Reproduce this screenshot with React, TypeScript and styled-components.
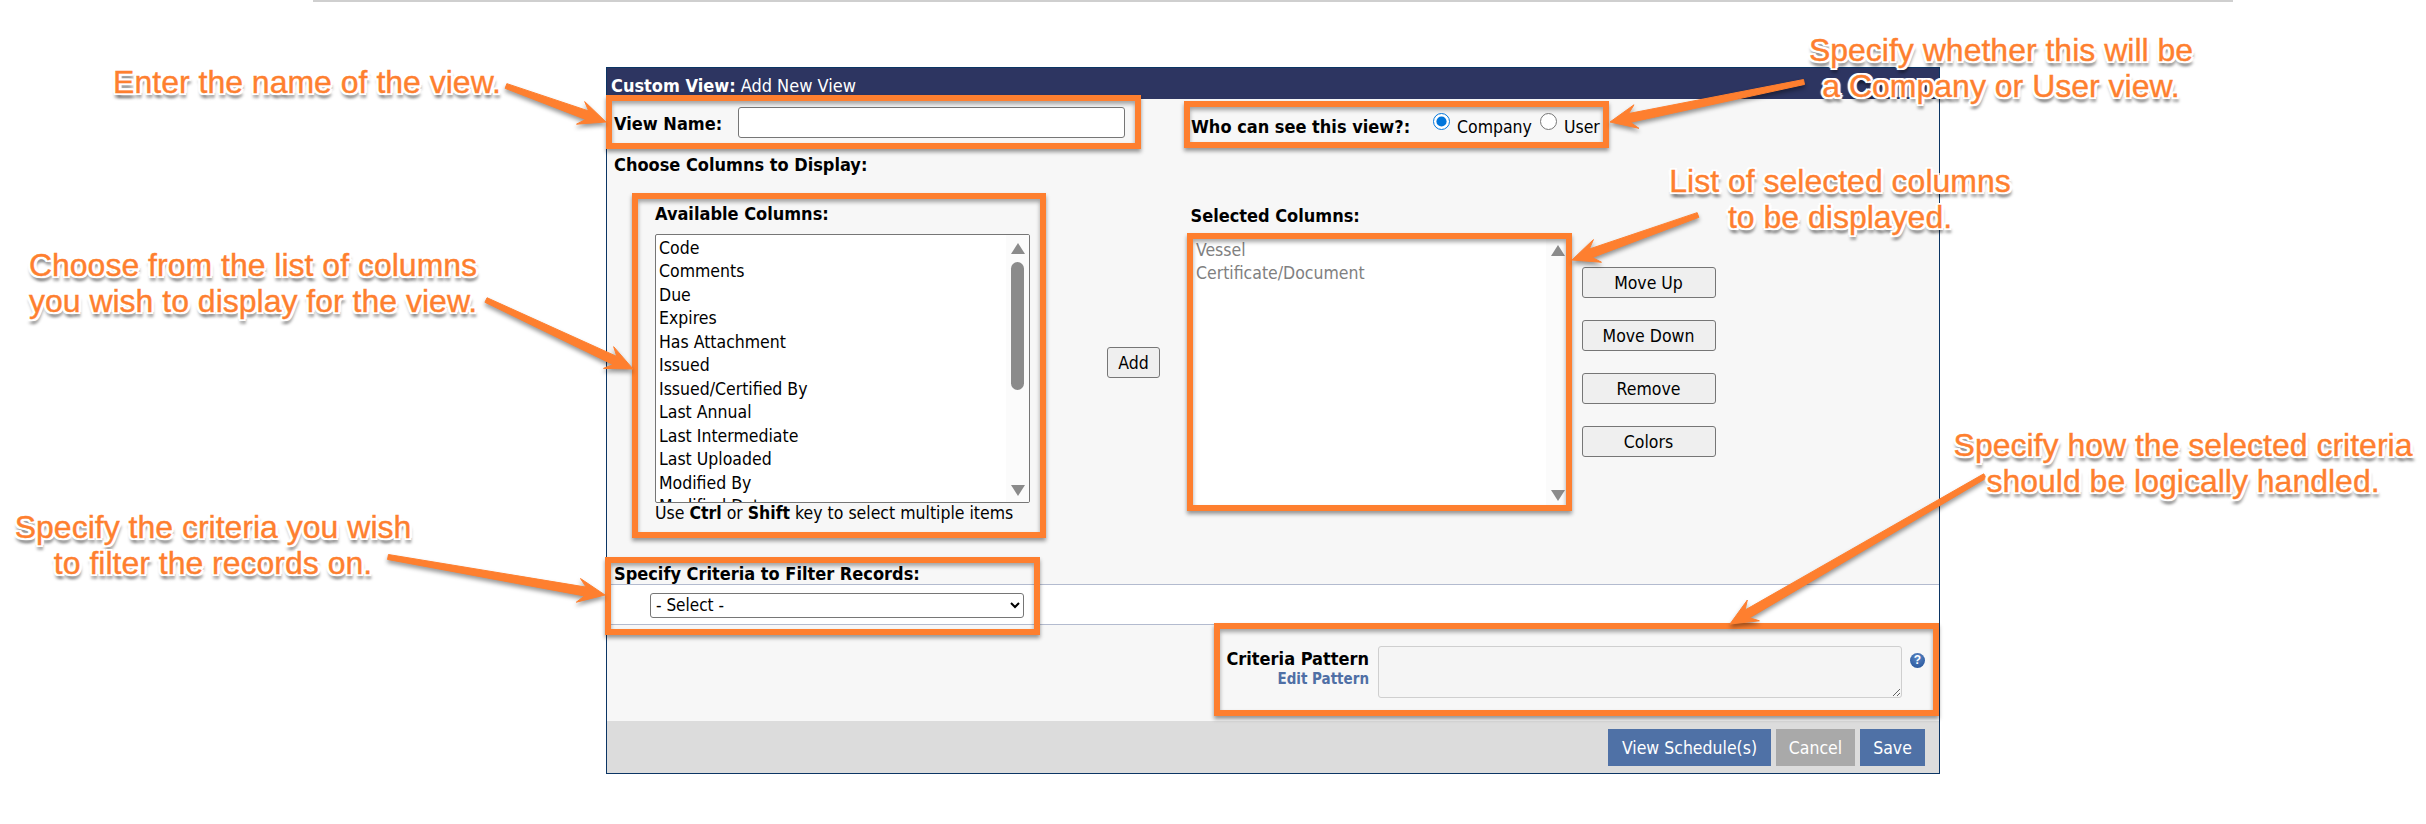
import React from "react";
import styled, { createGlobalStyle } from "styled-components";

const UI_FONT = `"DejaVu Sans Condensed", "DejaVu Sans", "Noto Sans", sans-serif`;
const ORANGE = "#fe7f2f";

const Global = createGlobalStyle`
  html, body { margin: 0; padding: 0; background: #fff; }
  body { font-family: ${UI_FONT}; font-size: 17.5px; color: #000; }
`;

const Page = styled.div`
  position: relative;
  width: 2426px;
  height: 824px;
  overflow: hidden;
  background: #fff;
`;
const TopRule = styled.div`
  width: 1920px;
  height: 2px;
  margin-left: 313px;
  margin-bottom: 65px;
  background: #cfcfcf;
`;
const Panel = styled.section`
  box-sizing: border-box;
  width: 1334px;
  height: 707px;
  margin-left: 606px;
  border: 1px solid #0b3564;
  background: #f7f7f7;
  display: flex;
  flex-direction: column;
`;
const Header = styled.header`
  height: 31px;
  flex: none;
  padding: 4px 0 0 4px;
  box-sizing: border-box;
  display: flex;
  align-items: center;
  gap: 5px;
  background: #2d3561;
  color: #fff;
  font-size: 18px;
`;
const Strong = styled.b`
  font-weight: 700;
`;
const TopRow = styled.div`
  height: 50px;
  flex: none;
  display: flex;
`;
const NameGroup = styled.div`
  width: 584px;
  box-sizing: border-box;
  padding: 8px 0 0 7px;
  display: flex;
  align-items: flex-start;
`;
const FieldLabel = styled.label`
  width: 124px;
  line-height: 34px;
  font-weight: 700;
  font-size: 18px;
`;
const NameInput = styled.input`
  box-sizing: border-box;
  width: 387px;
  height: 31px;
  border: 1px solid #767676;
  border-radius: 3px;
  background: #fff;
`;
const WhoGroup = styled.div`
  padding-top: 17px;
  display: flex;
  align-items: flex-start;
  line-height: 22px;
`;
const WhoLabel = styled.span`
  width: 242px;
  font-weight: 700;
  font-size: 18px;
`;
const Radio = styled.input`
  width: 17px;
  height: 17px;
  margin: -3px 7px 0 0;
  accent-color: #0075db;
`;
const RadioText = styled.span<{ $gap: number }>`
  margin-right: ${(p) => p.$gap}px;
`;
const SectionTitle = styled.h2`
  margin: 0;
  height: 32px;
  flex: none;
  padding-left: 7px;
  font-size: 18px;
  line-height: 32px;
  font-weight: 700;
`;
const ColumnsRow = styled.div`
  height: 375px;
  flex: none;
  display: flex;
  align-items: flex-start;
`;
const AvailableCol = styled.div`
  width: 376px;
  margin-left: 48px;
  padding-top: 21px;
`;
const ColTitle = styled.div`
  height: 22px;
  line-height: 24px;
  font-weight: 700;
  font-size: 18px;
  margin-bottom: 10px;
`;
const ListBox = styled.div<{ $h: number; $w: number; $bare?: boolean }>`
  position: relative;
  box-sizing: border-box;
  width: ${(p) => p.$w}px;
  height: ${(p) => p.$h}px;
  overflow: hidden;
  padding: 1.5px 0 0 ${(p) => (p.$bare ? 4.5 : 3)}px;
  background: #fff;
  border: 1px solid #767676;
  border-radius: 2px;
`;
const ListItem = styled.div<{ $muted?: boolean }>`
  height: 23.5px;
  line-height: 23.5px;
  font-size: 17.5px;
  white-space: nowrap;
  color: ${(p) => (p.$muted ? "#808080" : "#000")};
`;
const Track = styled.div`
  position: absolute;
  top: 0;
  right: 0;
  bottom: 0;
  width: 23px;
  background: #fbfbfb;
`;
const Thumb = styled.div`
  position: absolute;
  top: 27px;
  right: 5px;
  width: 13px;
  height: 128px;
  border-radius: 7px;
  background: #8b8b8b;
`;
const ScrollArrow = styled.div<{ $down?: boolean }>`
  position: absolute;
  right: 4px;
  ${(p) => (p.$down ? "bottom: 6px;" : "top: 8px;")}
  width: 0;
  height: 0;
  border-left: 7.5px solid transparent;
  border-right: 7.5px solid transparent;
  ${(p) => (p.$down ? "border-top" : "border-bottom")}: 11px solid #8b8b8b;
`;
const Hint = styled.div`
  height: 20px;
  line-height: 20px;
  font-size: 17.5px;
  white-space: nowrap;
`;
const GreyButton = styled.button<{ $w: number }>`
  box-sizing: border-box;
  width: ${(p) => p.$w}px;
  height: 31px;
  padding: 0;
  font-family: ${UI_FONT};
  font-size: 17.5px;
  color: #000;
  background: #efefef;
  border: 1px solid #767676;
  border-radius: 3px;
`;
const AddCol = styled.div`
  margin: 166px 31px 0 76px;
`;
const SelectedCol = styled.div`
  width: 391px;
  margin-left: -0.5px;
  padding-top: 23px;
`;
const SideButtons = styled.div`
  margin-top: 86px;
  display: flex;
  flex-direction: column;
  gap: 22px;
`;
const CriteriaTitle = styled.h2`
  margin: 0;
  flex: none;
  height: 28px;
  box-sizing: border-box;
  padding: 7px 0 0 7px;
  font-size: 18px;
  line-height: 22px;
  font-weight: 700;
`;
const SelectBand = styled.div`
  flex: none;
  box-sizing: border-box;
  height: 41px;
  padding-left: 43px;
  padding-top: 1px;
  display: flex;
  align-items: center;
  background: #fff;
  border-top: 1px solid #b3bbcf;
  border-bottom: 1px solid #b3bbcf;
`;
const CriteriaSelect = styled.select`
  box-sizing: border-box;
  width: 374px;
  height: 25px;
  padding-left: 1px;
  font-family: ${UI_FONT};
  font-size: 17px;
  border: 1px solid #767676;
  border-radius: 3px;
  background: #fff;
  color: #000;
`;
const PatternRow = styled.div`
  flex: 1;
  padding: 21px 14px 0 0;
  display: flex;
  justify-content: flex-end;
  align-items: flex-start;
`;
const PatternLabels = styled.div`
  margin-right: 9px;
  text-align: right;
`;
const PatternTitle = styled.div`
  margin-top: 2px;
  line-height: 22px;
  font-size: 18px;
  font-weight: 700;
`;
const PatternLink = styled.a`
  display: block;
  line-height: 18px;
  font-size: 15px;
  font-weight: 700;
  color: #4f6fa5;
`;
const PatternArea = styled.textarea`
  box-sizing: border-box;
  width: 524px;
  height: 52px;
  background: #f5f5f5;
  border: 1px solid #cfcfcf;
  border-radius: 3px;
`;
const HelpIcon = styled.span`
  width: 15px;
  height: 15px;
  margin: 7px 0 0 8px;
  border-radius: 50%;
  display: flex;
  align-items: center;
  justify-content: center;
  background: radial-gradient(circle at 50% 30%, #5b86c4, #1f4f96);
  color: #fff;
  font-family: "Liberation Sans", sans-serif;
  font-weight: 700;
  font-size: 12px;
  line-height: 15px;
`;
const Footer = styled.footer`
  flex: none;
  height: 52px;
  padding-right: 14px;
  display: flex;
  justify-content: flex-end;
  align-items: center;
  gap: 5px;
  background: #dcdcdc;
`;
const ActionButton = styled.button<{ $w: number; $muted?: boolean }>`
  width: ${(p) => p.$w}px;
  height: 37px;
  padding: 2px 0 0;
  border: 0;
  font-family: ${UI_FONT};
  font-size: 17.5px;
  color: #fff;
  background: ${(p) => (p.$muted ? "#a9a9a9" : "#4f71a6")};
`;

/* annotation layer */
const Highlight = styled.div<{ $x: number; $y: number; $w: number; $h: number }>`
  position: absolute;
  box-sizing: border-box;
  left: ${(p) => p.$x}px;
  top: ${(p) => p.$y}px;
  width: ${(p) => p.$w}px;
  height: ${(p) => p.$h}px;
  border: 6px solid ${ORANGE};
  box-shadow: 0 3px 4px rgba(0, 0, 0, 0.4), inset 0 3px 4px rgba(0, 0, 0, 0.35);
  pointer-events: none;
`;
const Callout = styled.div<{ $cx: number; $y: number }>`
  position: absolute;
  left: ${(p) => p.$cx - 300}px;
  top: ${(p) => p.$y}px;
  width: 600px;
  text-align: center;
  font-family: "Liberation Sans", Arial, sans-serif;
  font-size: 32px;
  line-height: 36px;
  color: ${ORANGE};
  -webkit-text-stroke: 0.4px ${ORANGE};
  text-shadow: 2px 0 0 #fff, -2px 0 0 #fff, 0 2px 0 #fff, 0 -2px 0 #fff, 2px 2px 0 #fff, -2px 2px 0 #fff,
    2px -2px 0 #fff, -2px -2px 0 #fff, 3px 0 1px #fff, -3px 0 1px #fff, 2px 5px 3px rgba(0, 0, 0, 0.4),
    -1px 5px 3px rgba(0, 0, 0, 0.3);
`;
const ArrowLayer = styled.svg`
  position: absolute;
  left: 0;
  top: 0;
  pointer-events: none;
  filter: drop-shadow(0 3px 2px rgba(0, 0, 0, 0.4));
`;

function arrowPoints(x1: number, y1: number, x2: number, y2: number) {
  const dx = x2 - x1;
  const dy = y2 - y1;
  const len = Math.hypot(dx, dy);
  const ux = dx / len;
  const uy = dy / len;
  const nx = -uy;
  const ny = ux;
  const at = (along: number, side: number) => `${x2 - ux * along + nx * side},${y2 - uy * along + ny * side}`;
  return [
    at(len, 2.5),
    at(20, 4.5),
    at(27, 12),
    at(0, 0),
    at(27, -12),
    at(20, -4.5),
    at(len, -2.5),
  ].join(" ");
}

const ARROWS = [
  [506, 86, 606, 122],
  [486, 300, 633, 369],
  [388, 557, 605, 595],
  [1804, 82, 1610, 122],
  [1698, 215, 1572, 260],
  [1985, 476, 1730, 624],
];

const AVAILABLE = [
  "Code",
  "Comments",
  "Due",
  "Expires",
  "Has Attachment",
  "Issued",
  "Issued/Certified By",
  "Last Annual",
  "Last Intermediate",
  "Last Uploaded",
  "Modified By",
  "Modified Date",
];

export default function App() {
  return (
    <Page>
      <Global />
      <TopRule />
      <Panel>
        <Header>
          <Strong>Custom View:</Strong>
          <span>Add New View</span>
        </Header>
        <TopRow>
          <NameGroup>
            <FieldLabel>View Name:</FieldLabel>
            <NameInput type="text" />
          </NameGroup>
          <WhoGroup>
            <WhoLabel>Who can see this view?:</WhoLabel>
            <Radio type="radio" name="who" defaultChecked />
            <RadioText $gap={8}>Company</RadioText>
            <Radio type="radio" name="who" />
            <RadioText $gap={0}>User</RadioText>
          </WhoGroup>
        </TopRow>
        <SectionTitle>Choose Columns to Display:</SectionTitle>
        <ColumnsRow>
          <AvailableCol>
            <ColTitle>Available Columns:</ColTitle>
            <ListBox $w={375} $h={269}>
              {AVAILABLE.map((c) => (
                <ListItem key={c}>{c}</ListItem>
              ))}
              <Track />
              <ScrollArrow />
              <Thumb />
              <ScrollArrow $down />
            </ListBox>
            <Hint>
              Use <Strong>Ctrl</Strong> or <Strong>Shift</Strong> key to select multiple items
            </Hint>
          </AvailableCol>
          <AddCol>
            <GreyButton $w={53}>Add</GreyButton>
          </AddCol>
          <SelectedCol>
            <ColTitle>Selected Columns:</ColTitle>
            <ListBox $w={379} $h={272} $bare>
              <ListItem $muted>Vessel</ListItem>
              <ListItem $muted>Certificate/Document</ListItem>
              <Track />
              <ScrollArrow />
              <ScrollArrow $down />
            </ListBox>
          </SelectedCol>
          <SideButtons>
            <GreyButton $w={134}>Move Up</GreyButton>
            <GreyButton $w={134}>Move Down</GreyButton>
            <GreyButton $w={134}>Remove</GreyButton>
            <GreyButton $w={134}>Colors</GreyButton>
          </SideButtons>
        </ColumnsRow>
        <CriteriaTitle>Specify Criteria to Filter Records:</CriteriaTitle>
        <SelectBand>
          <CriteriaSelect defaultValue="">
            <option value="">- Select -</option>
          </CriteriaSelect>
        </SelectBand>
        <PatternRow>
          <PatternLabels>
            <PatternTitle>Criteria Pattern</PatternTitle>
            <PatternLink>Edit Pattern</PatternLink>
          </PatternLabels>
          <PatternArea />
          <HelpIcon>?</HelpIcon>
        </PatternRow>
        <Footer>
          <ActionButton $w={163}>View Schedule(s)</ActionButton>
          <ActionButton $w={79} $muted>
            Cancel
          </ActionButton>
          <ActionButton $w={65}>Save</ActionButton>
        </Footer>
      </Panel>

      <Highlight $x={606} $y={95} $w={535} $h={54} />
      <Highlight $x={1184} $y={101} $w={425} $h={47} />
      <Highlight $x={632} $y={193} $w={414} $h={345} />
      <Highlight $x={1187} $y={233} $w={385} $h={278} />
      <Highlight $x={605} $y={557} $w={435} $h={78} />
      <Highlight $x={1214} $y={623} $w={725} $h={93} />

      <ArrowLayer width={2426} height={824} viewBox="0 0 2426 824">
        {ARROWS.map(([a, b, c, d]) => (
          <polygon key={`${a}-${b}`} points={arrowPoints(a, b, c, d)} fill={ORANGE} stroke={ORANGE} strokeWidth={1} strokeLinejoin="round" />
        ))}
      </ArrowLayer>

      <Callout $cx={307} $y={64}>Enter the name of the view.</Callout>
      <Callout $cx={253} $y={247}>
        Choose from the list of columns
        <br />
        you wish to display for the view.
      </Callout>
      <Callout $cx={213} $y={509}>
        Specify the criteria you wish
        <br />
        to filter the records on.
      </Callout>
      <Callout $cx={2001} $y={32}>
        Specify whether this will be
        <br />a Company or User view.
      </Callout>
      <Callout $cx={1840} $y={163}>
        List of selected columns
        <br />
        to be displayed.
      </Callout>
      <Callout $cx={2183} $y={427}>
        Specify how the selected criteria
        <br />
        should be logically handled.
      </Callout>
    </Page>
  );
}
